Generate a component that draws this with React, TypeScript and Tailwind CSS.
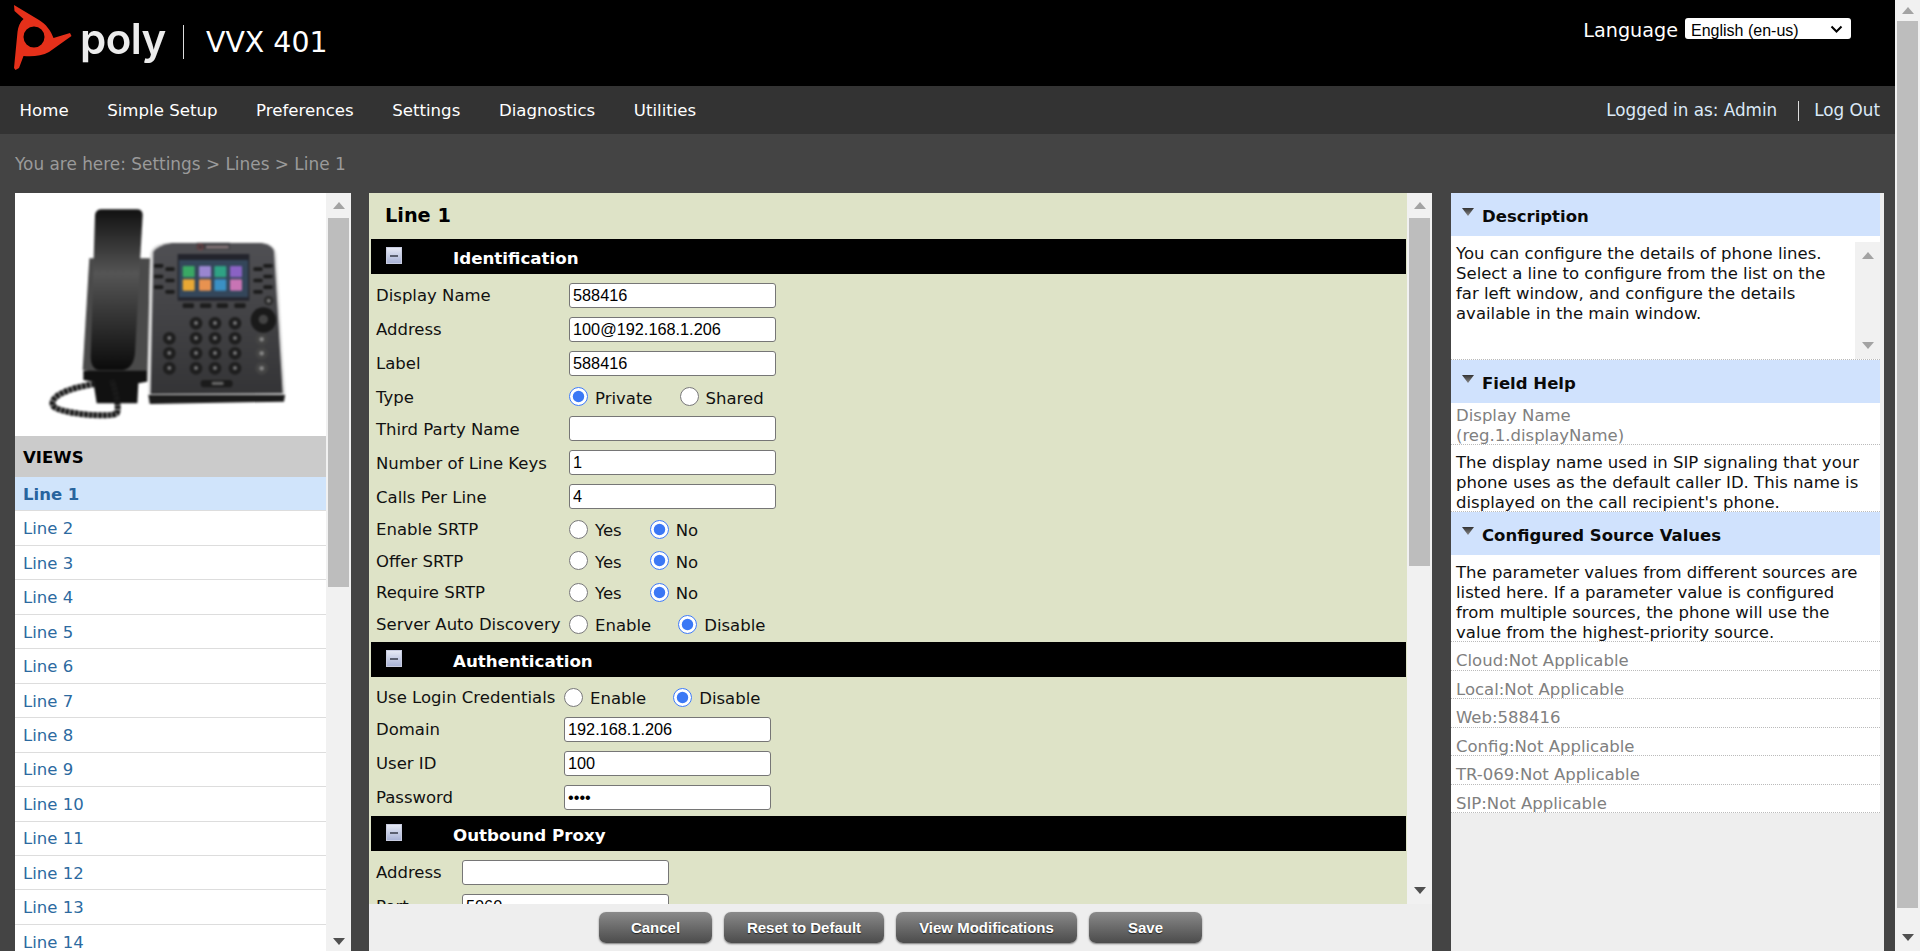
import React from "react";

const NAV = ["Home", "Simple Setup", "Preferences", "Settings", "Diagnostics", "Utilities"];
const LINES = Array.from({ length: 14 }, (_, i) => `Line ${i + 1}`);
const SOURCES = [
  "Cloud:Not Applicable",
  "Local:Not Applicable",
  "Web:588416",
  "Config:Not Applicable",
  "TR-069:Not Applicable",
  "SIP:Not Applicable",
];

function Arrow({ down, dark }: { down?: boolean; dark?: boolean }) {
  return (
    <svg width="12" height="7" viewBox="0 0 12 7" className={dark ? "text-[#505050]" : "text-[#a3a3a3]"}>
      <path d={down ? "M0 0H12L6 7Z" : "M6 0L12 7H0Z"} fill="currentColor" />
    </svg>
  );
}

function PolyLogo() {
  return (
    <svg width="80" height="75" viewBox="0 0 80 75" className="blur-[0.5px]">
      <path
        fillRule="evenodd"
        fill="#e5301a"
        d="M13 5L38 20C45 24 50 31 52.5 38L69 33L70.5 36L48 52C41 56 31 57 22.5 56L18 68L14.5 70L13 68L16.5 32C17 27 19 22 22.5 19L13.5 11ZM33 26.5A10.5 10.5 0 1 0 33 47.5A10.5 10.5 0 1 0 33 26.5Z"
      />
    </svg>
  );
}

function PhoneImage() {
  const keys: [number, number][] = [];
  [588, 645, 705].forEach((x) => [430, 475, 520, 565].forEach((y) => keys.push([x, y])));
  [475, 520, 565].forEach((y) => keys.push([508, y]));
  const tiles = [
    [548, 258, "#3aa864"], [597, 258, "#9a86d0"], [643, 258, "#2fa284"], [690, 258, "#8a62c4"],
    [548, 298, "#e8a834"], [597, 298, "#e89250"], [643, 298, "#3b90c4"], [690, 298, "#c874b4"],
  ] as const;
  return (
    <svg width="311" height="243" viewBox="45 39 933 729" className="blur-[0.8px]">
      <defs>
        <linearGradient id="handV" x1="0" x2="0" y1="0" y2="1">
          <stop offset="0" stopColor="#111" />
          <stop offset="0.4" stopColor="#555" />
          <stop offset="1" stopColor="#0b0b0b" />
        </linearGradient>
        <linearGradient id="body" x1="0" x2="0" y1="0" y2="1">
          <stop offset="0" stopColor="#505054" />
          <stop offset="1" stopColor="#343436" />
        </linearGradient>
      </defs>
      <path d="M268 235L450 235L442 605L248 570Z" fill="#4a4a4a" />
      <path d="M285 105Q287 88 305 88L410 88Q428 88 428 105L405 520Q400 565 370 570L295 570Q272 565 272 530Z" fill="url(#handV)" />
      <path d="M250 572L440 572L440 605L415 610L412 670L290 670L280 605L250 600Z" fill="#111" />
      <path
        d="M285 612C200 625 150 650 158 675C165 700 330 715 350 700C358 690 350 640 335 600"
        fill="none"
        stroke="#1a1a1a"
        strokeWidth="18"
        strokeDasharray="12 2"
      />
      <path d="M450 225Q453 195 498 188L792 188Q828 195 830 225L856 650L445 672Z" fill="#d8d8d8" />
      <path d="M460 215Q476 195 516 189L784 189Q818 195 822 215L848 640L452 642Z" fill="url(#body)" />
      <path d="M445 645L855 645L852 665L450 672Z" fill="#1b1b1b" />
      <path d="M590 188L690 188L690 208L590 208Z" fill="#3c3c40" />
      <circle cx="601" cy="201" r="8" fill="none" stroke="#b04040" strokeWidth="2" />
      <rect x="618" y="197" width="68" height="8" fill="#88787c" />
      <rect x="533" y="222" width="215" height="140" fill="#23242c" />
      <rect x="537" y="240" width="207" height="112" fill="#34465a" />
      {tiles.map(([x, y, c]) => (
        <rect key={`${x}-${y}`} x={x} y={y} width="36" height="34" rx="3" fill={c} />
      ))}
      {[548, 600, 650, 703].map((x) => (
        <rect key={x} x={x} y="370" width="34" height="14" rx="4" fill="#1c1c1c" />
      ))}
      {[[462, 252], [496, 262], [462, 284], [496, 296], [462, 316], [496, 330], [760, 262], [790, 252], [760, 296], [790, 284], [760, 330], [790, 316]].map(([x, y]) => (
        <rect key={`${x}${y}`} x={x} y={y} width="28" height="11" rx="4" fill="#1a1a1a" />
      ))}
      {keys.map(([x, y]) => (
        <g key={`${x}-${y}`}>
          <circle cx={x} cy={y} r="19" fill="#1e1e1e" />
          <circle cx={x} cy={y - 1} r="6" fill="#777779" />
        </g>
      ))}
      {[478, 520, 565].map((y) => (
        <g key={y}>
          <circle cx="785" cy={y} r="19" fill="#444" />
          <circle cx="785" cy={y} r="7" fill="#858585" />
        </g>
      ))}
      <circle cx="790" cy="420" r="38" fill="#1a1a1a" />
      <circle cx="790" cy="418" r="14" fill="#444" />
      <circle cx="806" cy="362" r="14" fill="#2a2a2a" />
      <circle cx="806" cy="362" r="6" fill="#777" />
      <rect x="602" y="600" width="96" height="22" rx="10" fill="#1b1b1b" />
      <rect x="635" y="605" width="36" height="10" rx="4" fill="#666" />
    </svg>
  );
}

function MinusBox() {
  return (
    <div className="mb-[2px] flex h-[17px] w-[16px] items-center justify-center border border-[#c8cce0] bg-linear-to-b from-[#e6e9f5] to-[#a9b3d6]">
      <div className="h-[2px] w-[8px] bg-[#5a5f70]" />
    </div>
  );
}

function SectionBar({ title }: { title: string }) {
  return (
    <div className="mx-[2px] flex h-[35px] w-[1035px] items-center bg-black pl-[15px] text-white">
      <MinusBox />
      <span className="ml-[51px] pt-[4px] text-[16.7px] font-bold">{title}</span>
    </div>
  );
}

function TextRow({ label, value, labelClass, type = "text", rowClass = "h-[34px]" }: {
  label: string;
  value: string;
  labelClass: string;
  type?: string;
  rowClass?: string;
}) {
  return (
    <div className={`flex items-center pl-[7px] ${rowClass}`}>
      <span className={`${labelClass} whitespace-nowrap pt-[3px]`}>{label}</span>
      <input
        type={type}
        defaultValue={value}
        className="h-[25px] w-[207px] rounded-[3px] border border-[#767676] bg-white pl-[3px] font-['Liberation_Sans',sans-serif] text-[16.3px] text-black"
      />
    </div>
  );
}

function RadioRow({ label, options, checked, name, labelClass, rowClass }: {
  label: string;
  options: [string, string];
  checked: number;
  name: string;
  labelClass: string;
  rowClass: string;
}) {
  return (
    <div className={`flex items-center pl-[7px] ${rowClass}`}>
      <span className={`${labelClass} whitespace-nowrap pt-[3px]`}>{label}</span>
      <div className={options[0] === "Yes" ? "flex gap-[28px]" : "flex gap-[27px]"}>
        {options.map((o, i) => (
          <label key={o} className="flex items-center gap-[7px]">
            <input
              type="radio"
              name={name}
              defaultChecked={i === checked}
              className="m-0 h-[19px] w-[19px] accent-[#3b78f5]"
            />
            <span className="pt-[5px]">{o}</span>
          </label>
        ))}
      </div>
    </div>
  );
}

function HelpHeader({ title }: { title: string }) {
  return (
    <div className="flex h-[43px] items-center bg-[#d0e2fd] pl-[11px] font-bold text-[#0a0a0a]">
      <svg width="12" height="8" viewBox="0 0 12 8" className="mb-[6px]">
        <defs>
          <linearGradient id="tri" x1="0" x2="0" y1="0" y2="1">
            <stop offset="0" stopColor="#333" />
            <stop offset="1" stopColor="#888" />
          </linearGradient>
        </defs>
        <path d="M0 0H12L6 8Z" fill="url(#tri)" />
      </svg>
      <span className="ml-[8px] pt-[6px] text-[16.5px]">{title}</span>
    </div>
  );
}

const ACTIONS = [
  ["Cancel", "w-[113px]"],
  ["Reset to Default", "w-[160px]"],
  ["View Modifications", "w-[181px]"],
  ["Save", "w-[113px]"],
];

export default function App() {
  return (
    <div className="flex h-[951px] w-[1920px] overflow-hidden bg-[#444] font-['DejaVu_Sans',sans-serif] text-[16.5px] text-[#111]">
      <div className="flex w-[1895px] flex-col">
        <header className="flex h-[86px] bg-black text-white">
          <div className="ml-[1px]">
            <PolyLogo />
          </div>
          <span className="ml-[-1px] mt-[14px] h-[50px] w-[88px] font-['Inter',sans-serif] text-[42px] leading-[50px] font-semibold tracking-[-0.5px] text-[#ececec] blur-[0.6px]">
            poly
          </span>
          <div className="ml-[15px] mt-[25px] h-[34px] w-px bg-[#ddd]" />
          <span className="ml-[22px] mt-[24px] text-[28.4px] leading-[38px]">VVX 401</span>
          <div className="ml-auto mr-[44px] mt-[20px] flex h-[21px] items-center gap-[7px]">
            <span className="pt-[2px] text-[19.2px]">Language</span>
            <div className="relative">
              <select className="h-[21px] w-[166px] appearance-none rounded-[3px] bg-white pl-[6px] pt-[1px] font-['Liberation_Sans',sans-serif] text-[16px] text-black">
                <option>English (en-us)</option>
              </select>
              <svg width="13" height="8" viewBox="0 0 13 8" className="pointer-events-none absolute right-[8px] top-[7px]">
                <path d="M1.5 1.5L6.5 6.5L11.5 1.5" fill="none" stroke="#000" strokeWidth="2" />
              </svg>
            </div>
          </div>
        </header>

        <nav className="flex h-[48px] items-center bg-[#333] pl-[19.6px] pr-[15px] pt-[2px] text-white">
          <div className="flex gap-[38.6px] text-[16.6px]">
            {NAV.map((n) => (
              <span key={n}>{n}</span>
            ))}
          </div>
          <div className="ml-auto flex items-center text-[16.8px] text-[#dbe9f7]">
            <span>Logged in as: Admin</span>
            <div className="ml-[21px] mr-[15px] h-[20px] w-px bg-[#ddd]" />
            <span>Log Out</span>
          </div>
        </nav>

        <div className="flex h-[59px] items-center pl-[15px] pt-[2px] text-[16.9px] text-[#9a9a9a]">You are here: Settings &gt; Lines &gt; Line 1</div>

        <div className="flex min-h-0 flex-1 pl-[15px]">
          {/* left views column */}
          <div className="flex h-[758px] w-[336px] overflow-hidden bg-white">
            <div className="w-[311px]">
              <PhoneImage />
              <div className="flex h-[41px] items-center bg-[#cbcbcb] pl-[8px] pt-[3px] text-[16.6px] font-bold text-black">VIEWS</div>
              {LINES.map((l, i) => (
                <div
                  key={l}
                  className={
                    i === 0
                      ? "flex h-[34.46px] items-center border-b border-[#ddd] bg-[#d0e4fb] pl-[8px] pt-[3px] font-bold text-[#28649e]"
                      : "flex h-[34.46px] items-center border-b border-[#ddd] pl-[8px] pt-[3px] text-[#2c6aa0]"
                  }
                >
                  {l}
                </div>
              ))}
            </div>
            <div className="flex w-[25px] flex-col items-center bg-[#f1f1f1]">
              <div className="flex h-[25px] items-center justify-center">
                <Arrow />
              </div>
              <div className="h-[369px] w-[21px] bg-[#bdbdbd]" />
              <div className="flex flex-1 items-end pb-[6px]">
                <Arrow down dark />
              </div>
            </div>
          </div>

          {/* center form */}
          <div className="ml-[18px] flex h-[758px] w-[1063px] flex-col bg-[#eee]">
            <div className="flex h-[711px] overflow-hidden">
              <div className="w-[1038px] overflow-hidden bg-[#dee3c7]">
                <div className="flex h-[46px] items-center pl-[16px] text-[19.3px] font-bold text-black">Line 1</div>
                <SectionBar title="Identification" />
                <div className="pt-[4px] pb-[2px]">
                  <TextRow label="Display Name" value="588416" labelClass="w-[193px]" />
                  <TextRow label="Address" value="100@192.168.1.206" labelClass="w-[193px]" />
                  <TextRow label="Label" value="588416" labelClass="w-[193px]" />
                  <RadioRow label="Type" name="type" options={["Private", "Shared"]} checked={0} labelClass="w-[193px]" rowClass="h-[31px] pt-[2px]" />
                  <TextRow label="Third Party Name" value="" labelClass="w-[193px] translate-y-px" />
                  <TextRow label="Number of Line Keys" value="1" labelClass="w-[193px] translate-y-px" />
                  <TextRow label="Calls Per Line" value="4" labelClass="w-[193px] translate-y-px" />
                  <RadioRow label="Enable SRTP" name="enable" options={["Yes", "No"]} checked={1} labelClass="w-[193px]" rowClass="h-[32px]" />
                  <RadioRow label="Offer SRTP" name="offer" options={["Yes", "No"]} checked={1} labelClass="w-[193px]" rowClass="h-[31px]" />
                  <RadioRow label="Require SRTP" name="require" options={["Yes", "No"]} checked={1} labelClass="w-[193px]" rowClass="h-[32px]" />
                  <RadioRow label="Server Auto Discovery" name="discovery" options={["Enable", "Disable"]} checked={1} labelClass="w-[193px]" rowClass="h-[32px]" />
                </div>
                <SectionBar title="Authentication" />
                <div className="pt-[5px] pb-[2px]">
                  <RadioRow label="Use Login Credentials" name="login" options={["Enable", "Disable"]} checked={1} labelClass="w-[188px]" rowClass="h-[30px]" />
                  <TextRow label="Domain" value="192.168.1.206" labelClass="w-[188px]" />
                  <TextRow label="User ID" value="100" labelClass="w-[188px]" />
                  <TextRow label="Password" value="1234" type="password" labelClass="w-[188px]" />
                </div>
                <SectionBar title="Outbound Proxy" />
                <div className="pt-[4px]">
                  <TextRow label="Address" value="" labelClass="w-[86px]" />
                  <TextRow label="Port" value="5060" labelClass="w-[86px]" />
                </div>
              </div>
              <div className="flex w-[25px] flex-col items-center bg-[#f1f1f1]">
                <div className="flex h-[25px] items-center justify-center">
                  <Arrow />
                </div>
                <div className="h-[348px] w-[21px] bg-[#bdbdbd]" />
                <div className="flex flex-1 items-end pb-[10px]">
                  <Arrow down dark />
                </div>
              </div>
            </div>
            <div className="flex h-[47px] gap-[12px] pl-[230px] pt-[8px]">
              {ACTIONS.map(([a, w]) => (
                <button
                  key={a}
                  className={`${w} h-[31px] rounded-[7px] bg-linear-to-b from-[#8a8a8a] to-[#4c4c4c] pt-[2px] font-['Liberation_Sans',sans-serif] text-[15px] font-bold text-white shadow-[0_1px_2px_rgba(0,0,0,0.5)] [text-shadow:0_1px_1px_#222]`}
                >
                  {a}
                </button>
              ))}
            </div>
          </div>

          {/* right help column */}
          <div className="ml-[19px] h-[758px] w-[433px] bg-[#eee] pr-[4px]">
            <HelpHeader title="Description" />
            <div className="flex h-[124px] border-b border-dotted border-[#bbb] bg-white">
              <p className="flex-1 pl-[5px] pt-[8px] leading-[20px]">
                You can configure the details of phone lines.
                <br />
                Select a line to configure from the list on the
                <br />
                far left window, and configure the details
                <br />
                available in the main window.
              </p>
              <div className="mt-[6px] flex w-[25px] flex-col items-center justify-between bg-[#f1f1f1] py-[10px]">
                <Arrow />
                <Arrow down />
              </div>
            </div>
            <HelpHeader title="Field Help" />
            <div className="h-[42px] border-b border-dotted border-[#bbb] bg-white pl-[5px] pt-[3px] leading-[20px] text-[#808080]">
              Display Name
              <br />
              (reg.1.displayName)
            </div>
            <div className="h-[67px] border-b border-dotted border-[#bbb] bg-white pl-[5px] pt-[8px] leading-[20px]">
              The display name used in SIP signaling that your
              <br />
              phone uses as the default caller ID. This name is
              <br />
              displayed on the call recipient's phone.
            </div>
            <HelpHeader title="Configured Source Values" />
            <div className="h-[87px] border-b border-dotted border-[#bbb] bg-white pl-[5px] pt-[8px] leading-[20px]">
              The parameter values from different sources are
              <br />
              listed here. If a parameter value is configured
              <br />
              from multiple sources, the phone will use the
              <br />
              value from the highest-priority source.
            </div>
            {SOURCES.map((s) => (
              <div key={s} className="flex h-[28.5px] items-start border-b border-dotted border-[#bbb] bg-white pl-[5px] pt-[9px] leading-[20px] text-[#808080]">
                {s}
              </div>
            ))}
          </div>
        </div>
      </div>

      <div className="flex w-[25px] flex-col items-center bg-[#f1f1f1]">
        <div className="flex h-[21px] items-center justify-center">
          <Arrow />
        </div>
        <div className="h-[887px] w-[21px] bg-[#bdbdbd]" />
        <div className="flex flex-1 items-end pb-[10px]">
          <Arrow down dark />
        </div>
      </div>
    </div>
  );
}
